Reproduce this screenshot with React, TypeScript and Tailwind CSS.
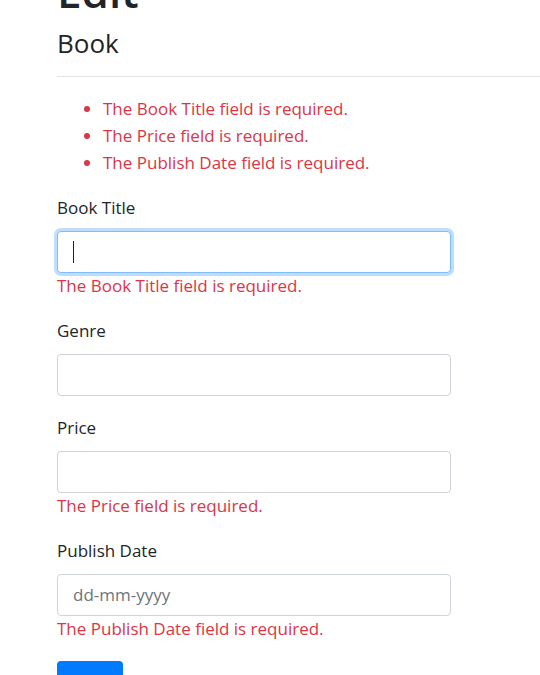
const errors = [
  'The Book Title field is required.',
  'The Price field is required.',
  'The Publish Date field is required.',
];

function Field({
  label,
  error,
  placeholder,
  focused,
}: {
  label: string;
  error?: string;
  placeholder?: string;
  focused?: boolean;
}) {
  return (
    <div className="mb-[19px]">
      <label className="block mb-[10px] leading-[26px]">{label}</label>
      <div
        className={`h-[42px] w-[394px] rounded-[4px] border bg-white flex items-center px-[15px] ${
          focused
            ? 'border-[#80bdff] shadow-[0_0_0_3px_rgba(0,123,255,0.25)]'
            : 'border-[#ced4da]'
        }`}
      >
        {focused && <span className="w-px h-[22px] bg-[#212529]" />}
        {placeholder && <span className="text-[#6c757d] leading-[26px]">{placeholder}</span>}
      </div>
      {error && <div className="text-[#dc3545] leading-[26px]">{error}</div>}
    </div>
  );
}

export default function App() {
  return (
    <div
      className="h-[675px] bg-white text-[#212529] text-[17px] overflow-hidden"
      style={{ fontFamily: '"Open Sans", "Noto Sans", sans-serif' }}
    >
      <div className="pl-[57px]">
        <h1 className="text-[44px] font-semibold leading-[52px] mt-[-35px]">Edit</h1>
        <h4 className="text-[26px] font-medium leading-[32px] mt-[10px]">Book</h4>
        <hr className="mt-[17px] border-t border-[#e5e5e5]" />
        <ul className="list-disc pl-[46px] mt-[18px] mb-[19px] text-[#dc3545] marker:text-[#dc3545]">
          {errors.map((e) => (
            <li key={e} className="leading-[27px]">
              {e}
            </li>
          ))}
        </ul>
        <Field label="Book Title" error={errors[0]} focused />
        <Field label="Genre" />
        <Field label="Price" error={errors[1]} />
        <Field label="Publish Date" error={errors[2]} placeholder="dd-mm-yyyy" />
        <button className="h-[42px] w-[66px] rounded-[4px] bg-[#007bff]" />
      </div>
    </div>
  );
}
